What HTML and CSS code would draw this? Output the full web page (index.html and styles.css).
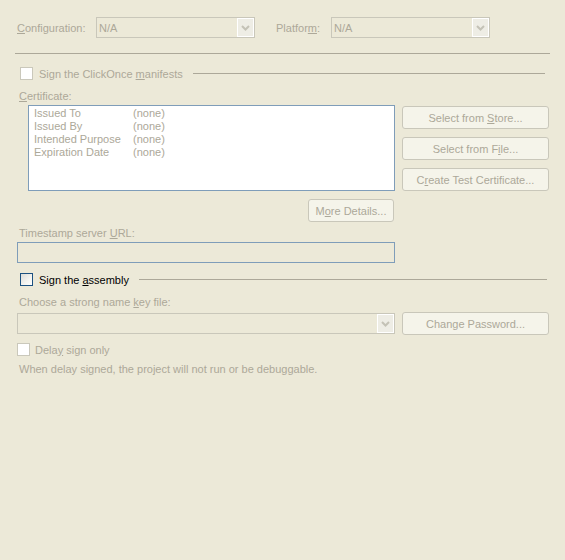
FILE: index.html
```html
<!DOCTYPE html>
<html>
<head>
<meta charset="utf-8">
<link rel="stylesheet" href="styles.css">
</head>
<body>
<div class="page">
  <div class="config-row">
    <span class="lbl lbl-config"><u>C</u>onfiguration:</span>
    <div class="combo combo-small"><span class="combo-text">N/A</span><span class="combo-btn"><svg width="9" height="6" viewBox="0 0 9 6"><polyline points="1,1 4.5,4.5 8,1" fill="none" stroke="#C4C2B6" stroke-width="2"/></svg></span></div>
    <span class="lbl lbl-platform">Platfor<u>m</u>:</span>
    <div class="combo combo-small"><span class="combo-text">N/A</span><span class="combo-btn"><svg width="9" height="6" viewBox="0 0 9 6"><polyline points="1,1 4.5,4.5 8,1" fill="none" stroke="#C4C2B6" stroke-width="2"/></svg></span></div>
  </div>
  <div class="separator"></div>

  <div class="group-row row-clickonce">
    <span class="check check-disabled"></span>
    <span class="lbl group-text">Sign the ClickOnce <u>m</u>anifests</span>
    <span class="group-line"></span>
  </div>

  <div class="lbl lbl-cert"><u>C</u>ertificate:</div>
  <div class="cert-area">
    <div class="listbox">
      <div class="cert-row"><span class="cert-key">Issued To</span><span>(none)</span></div>
      <div class="cert-row"><span class="cert-key">Issued By</span><span>(none)</span></div>
      <div class="cert-row"><span class="cert-key">Intended Purpose</span><span>(none)</span></div>
      <div class="cert-row"><span class="cert-key">Expiration Date</span><span>(none)</span></div>
    </div>
    <div class="btn-col">
      <div class="btn btn-wide"><span>Select from <u>S</u>tore...</span></div>
      <div class="btn btn-wide"><span>Select from F<u>i</u>le...</span></div>
      <div class="btn btn-wide"><span>C<u>r</u>eate Test Certificate...</span></div>
    </div>
  </div>
  <div class="more-row"><div class="btn btn-more"><span>M<u>o</u>re Details...</span></div></div>

  <div class="lbl lbl-ts">Timestamp server <u>U</u>RL:</div>
  <div class="textbox"></div>

  <div class="group-row row-assembly">
    <span class="check check-enabled"></span>
    <span class="group-text enabled-text">Sign the <u>a</u>ssembly</span>
    <span class="group-line line-assembly"></span>
  </div>

  <div class="lbl lbl-key">Choose a strong name <u>k</u>ey file:</div>
  <div class="key-row">
    <div class="combo combo-key"><span class="combo-text"></span><span class="combo-btn"><svg width="9" height="6" viewBox="0 0 9 6"><polyline points="1,1 4.5,4.5 8,1" fill="none" stroke="#C4C2B6" stroke-width="2"/></svg></span></div>
    <div class="btn btn-wide"><span>Change Password...</span></div>
  </div>

  <div class="delay-row">
    <span class="check check-disabled"></span>
    <span class="lbl delay-text">Dela<u>y</u> sign only</span>
  </div>
  <div class="lbl lbl-note">When delay signed, the project will not run or be debuggable.</div>
</div>
</body>
</html>
```

FILE: styles.css
```css
html, body {
  margin: 0;
  padding: 0;
  background: #ECE9D8;
  width: 565px;
  height: 560px;
  overflow: hidden;
}
body {
  font-family: "Liberation Sans", Arial, sans-serif;
  font-size: 11px;
  color: #ACA899;
}
u {
  text-decoration: underline;
  text-underline-offset: 1px;
}
.page {
  position: relative;
}
.lbl {
  color: #ACA899;
  line-height: 13px;
  white-space: nowrap;
}
.config-row {
  display: flex;
  align-items: center;
  height: 21px;
  margin-top: 17px;
  padding-left: 17px;
}
.lbl-config {
  width: 79px;
  padding-top: 1px;
}
.lbl-platform {
  margin-left: 21px;
  width: 55px;
  padding-top: 1px;
}
.combo {
  box-sizing: border-box;
  height: 21px;
  border: 1px solid #C9C7BA;
  background: #ECE9D8;
  display: flex;
  align-items: stretch;
}
.combo-small {
  width: 159px;
}
.combo-text {
  flex: 1;
  padding-left: 2px;
  padding-top: 1px;
  line-height: 19px;
  color: #ACA899;
}
.combo-btn {
  box-sizing: border-box;
  width: 17px;
  border: 1px solid #FFFFFF;
  background: #EEEDE5;
  display: flex;
  align-items: center;
  justify-content: center;
}
.separator {
  margin: 15px 15px 0 15px;
  height: 1px;
  background: #ACA899;
}
.group-row {
  display: flex;
  align-items: center;
  height: 13px;
}
.row-clickonce {
  margin-top: 13px;
  padding-left: 20px;
  padding-right: 20px;
}
.check {
  box-sizing: border-box;
  width: 13px;
  height: 13px;
  flex: none;
}
.check-disabled {
  border: 1px solid #CAC8BB;
  background: #FFFFFF;
}
.check-enabled {
  border: 1px solid #1C5180;
  background: linear-gradient(135deg, #DCDCD7 0%, #F4F4F0 60%, #FFFFFF 100%);
}
.group-text {
  margin-left: 6px;
  line-height: 13px;
  white-space: nowrap;
  padding-top: 1px;
}
.enabled-text {
  color: #000000;
}
.group-line {
  flex: 1;
  height: 1px;
  background: #ACA899;
  margin-left: 10px;
}
.lbl-cert {
  margin-top: 10px;
  padding-left: 19px;
}
.cert-area {
  display: flex;
  margin-top: 2px;
  padding-left: 28px;
}
.listbox {
  box-sizing: border-box;
  width: 367px;
  height: 86px;
  border: 1px solid #7F9DB9;
  background: #FFFFFF;
  padding: 1px 0 0 5px;
}
.cert-row {
  display: flex;
  line-height: 13px;
  color: #ACA899;
}
.cert-key {
  width: 99px;
}
.btn-col {
  display: flex;
  flex-direction: column;
  gap: 8px;
  margin-left: 7px;
  margin-top: 1px;
}
.btn {
  box-sizing: border-box;
  height: 23px;
  border: 1px solid #C9C7BA;
  border-radius: 3px;
  background: #F5F4EA;
  color: #ACA899;
  display: flex;
  align-items: center;
  justify-content: center;
  white-space: nowrap;
}
.btn-wide {
  width: 147px;
}
.more-row {
  display: flex;
  margin-top: 8px;
  padding-left: 308px;
}
.btn-more {
  width: 86px;
}
.lbl-ts {
  margin-top: 5px;
  padding-left: 19px;
}
.textbox {
  box-sizing: border-box;
  margin: 2px 0 0 17px;
  width: 378px;
  height: 21px;
  border: 1px solid #7F9DB9;
  background: #ECE9D8;
}
.row-assembly {
  margin-top: 10px;
  padding-left: 20px;
  padding-right: 18px;
}
.line-assembly {
  margin-left: 10px;
}
.lbl-key {
  margin-top: 10px;
  padding-left: 19px;
}
.key-row {
  display: flex;
  align-items: center;
  gap: 7px;
  margin-top: 3px;
  padding-left: 17px;
}
.combo-key {
  width: 378px;
}
.delay-row {
  display: flex;
  align-items: center;
  height: 13px;
  margin-top: 8px;
  padding-left: 17px;
}
.delay-text {
  margin-left: 5px;
  padding-top: 1px;
}
.lbl-note {
  margin-top: 7px;
  padding-left: 19px;
}
```
